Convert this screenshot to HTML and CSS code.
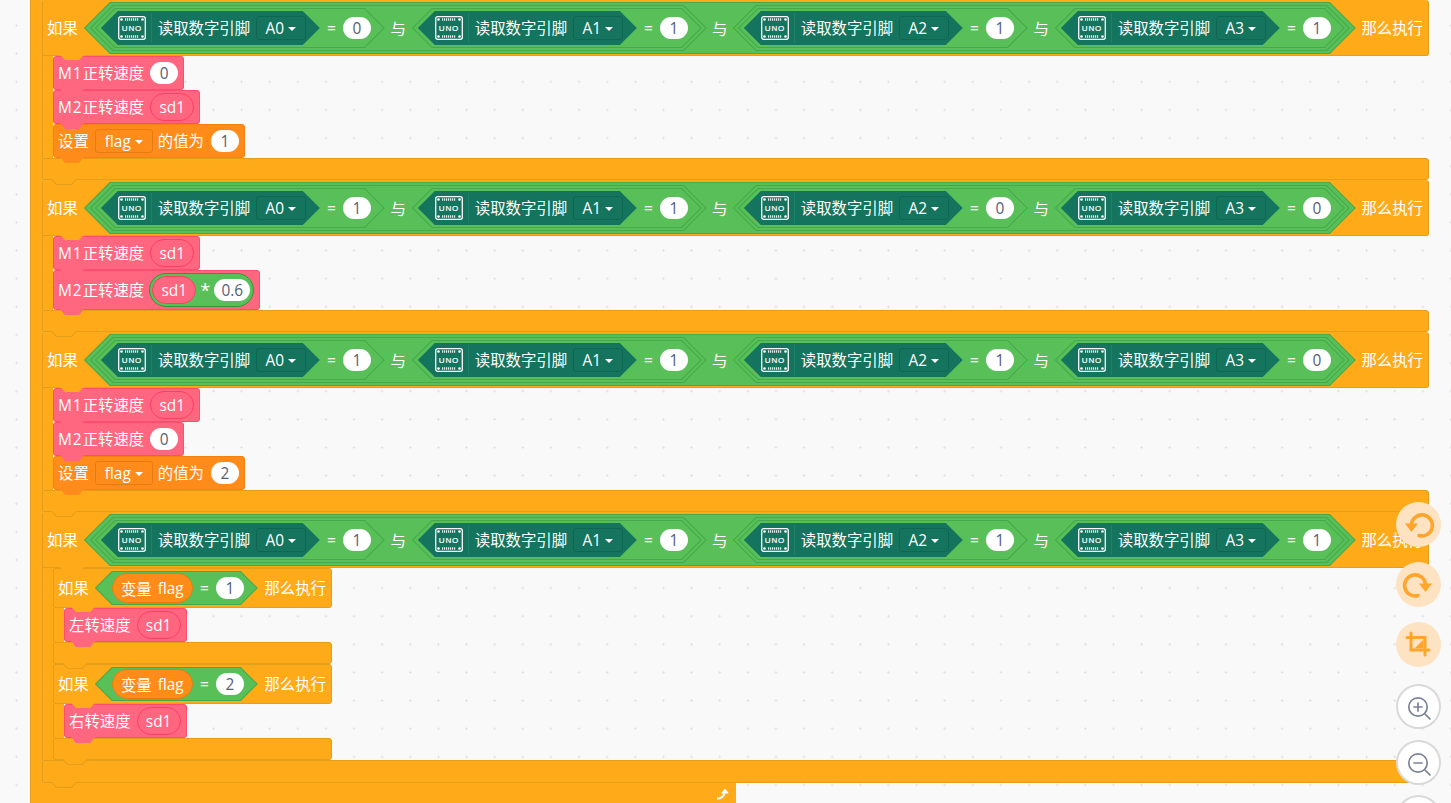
FILE: index.html
```html
<!DOCTYPE html>
<html lang="zh">
<head>
<meta charset="utf-8">
<title>Blocks</title>
<link rel="stylesheet" href="styles.css">
</head>
<body>
<svg class="defs">
  <symbol id="uno" viewBox="0 0 28 24">
    <rect x="0.7" y="0.7" width="26.6" height="22.6" rx="2" fill="none" stroke="#fff" stroke-width="1.3"/>
    <circle cx="3.5" cy="3.5" r="1.3" fill="#fff"/><circle cx="24.5" cy="3.5" r="1.3" fill="#fff"/>
    <circle cx="3.5" cy="20.5" r="1.3" fill="#fff"/><circle cx="24.5" cy="20.5" r="1.3" fill="#fff"/>
    <path d="M7 3.5H21M7 20.5H21" stroke="#fff" stroke-opacity=".85" stroke-width="2.6" stroke-dasharray="1.2 .8" fill="none"/>
    <text x="14" y="15.2" text-anchor="middle" font-size="8" font-weight="400" letter-spacing=".9" fill="#fff" stroke="#fff" stroke-width=".2" font-family="Liberation Sans, sans-serif">UNO</text>
  </symbol>
</svg>
<main class="canvas">
  <div class="program">
    <section class="if">
      <div class="head">
        <span class="t">如果</span>
        <div class="hex h52">
          <div class="hex h46">
            <div class="hex h40"><div class="hex h34 dark"><svg class="uno"><use href="#uno"/></svg><span class="sep"></span><span class="t">读取数字引脚</span><span class="dd">A0<i class="caret"></i></span></div><span class="op">=</span><span class="pill">0</span></div>
            <span class="and">与</span>
            <div class="hex h40"><div class="hex h34 dark"><svg class="uno"><use href="#uno"/></svg><span class="sep"></span><span class="t">读取数字引脚</span><span class="dd">A1<i class="caret"></i></span></div><span class="op">=</span><span class="pill">1</span></div>
          </div>
          <span class="and mid">与</span>
          <div class="hex h46">
            <div class="hex h40"><div class="hex h34 dark"><svg class="uno"><use href="#uno"/></svg><span class="sep"></span><span class="t">读取数字引脚</span><span class="dd">A2<i class="caret"></i></span></div><span class="op">=</span><span class="pill">1</span></div>
            <span class="and">与</span>
            <div class="hex h40"><div class="hex h34 dark"><svg class="uno"><use href="#uno"/></svg><span class="sep"></span><span class="t">读取数字引脚</span><span class="dd">A3<i class="caret"></i></span></div><span class="op">=</span><span class="pill">1</span></div>
          </div>
        </div>
        <span class="t">那么执行</span>
      </div>
      <div class="body">
        <div class="stmt pink"><span class="t"><span class="lat">M1</span>正转速度</span><span class="pill">0</span></div>
        <div class="stmt pink"><span class="t"><span class="lat">M2</span>正转速度</span><span class="ref">sd1</span></div>
        <div class="stmt amber"><span class="t">设置</span><span class="dd amber-dd">flag<i class="caret"></i></span><span class="t">的值为</span><span class="pill">1</span></div>
      </div>
      <div class="foot"></div>
    </section>

    <section class="if">
      <div class="head">
        <span class="t">如果</span>
        <div class="hex h52">
          <div class="hex h46">
            <div class="hex h40"><div class="hex h34 dark"><svg class="uno"><use href="#uno"/></svg><span class="sep"></span><span class="t">读取数字引脚</span><span class="dd">A0<i class="caret"></i></span></div><span class="op">=</span><span class="pill">1</span></div>
            <span class="and">与</span>
            <div class="hex h40"><div class="hex h34 dark"><svg class="uno"><use href="#uno"/></svg><span class="sep"></span><span class="t">读取数字引脚</span><span class="dd">A1<i class="caret"></i></span></div><span class="op">=</span><span class="pill">1</span></div>
          </div>
          <span class="and mid">与</span>
          <div class="hex h46">
            <div class="hex h40"><div class="hex h34 dark"><svg class="uno"><use href="#uno"/></svg><span class="sep"></span><span class="t">读取数字引脚</span><span class="dd">A2<i class="caret"></i></span></div><span class="op">=</span><span class="pill">0</span></div>
            <span class="and">与</span>
            <div class="hex h40"><div class="hex h34 dark"><svg class="uno"><use href="#uno"/></svg><span class="sep"></span><span class="t">读取数字引脚</span><span class="dd">A3<i class="caret"></i></span></div><span class="op">=</span><span class="pill">0</span></div>
          </div>
        </div>
        <span class="t">那么执行</span>
      </div>
      <div class="body">
        <div class="stmt pink"><span class="t"><span class="lat">M1</span>正转速度</span><span class="ref">sd1</span></div>
        <div class="stmt pink tall"><span class="t"><span class="lat">M2</span>正转速度</span><div class="math"><span class="ref">sd1</span><span class="star">*</span><span class="pill wide">0.6</span></div></div>
      </div>
      <div class="foot"></div>
    </section>

    <section class="if">
      <div class="head">
        <span class="t">如果</span>
        <div class="hex h52">
          <div class="hex h46">
            <div class="hex h40"><div class="hex h34 dark"><svg class="uno"><use href="#uno"/></svg><span class="sep"></span><span class="t">读取数字引脚</span><span class="dd">A0<i class="caret"></i></span></div><span class="op">=</span><span class="pill">1</span></div>
            <span class="and">与</span>
            <div class="hex h40"><div class="hex h34 dark"><svg class="uno"><use href="#uno"/></svg><span class="sep"></span><span class="t">读取数字引脚</span><span class="dd">A1<i class="caret"></i></span></div><span class="op">=</span><span class="pill">1</span></div>
          </div>
          <span class="and mid">与</span>
          <div class="hex h46">
            <div class="hex h40"><div class="hex h34 dark"><svg class="uno"><use href="#uno"/></svg><span class="sep"></span><span class="t">读取数字引脚</span><span class="dd">A2<i class="caret"></i></span></div><span class="op">=</span><span class="pill">1</span></div>
            <span class="and">与</span>
            <div class="hex h40"><div class="hex h34 dark"><svg class="uno"><use href="#uno"/></svg><span class="sep"></span><span class="t">读取数字引脚</span><span class="dd">A3<i class="caret"></i></span></div><span class="op">=</span><span class="pill">0</span></div>
          </div>
        </div>
        <span class="t">那么执行</span>
      </div>
      <div class="body">
        <div class="stmt pink"><span class="t"><span class="lat">M1</span>正转速度</span><span class="ref">sd1</span></div>
        <div class="stmt pink"><span class="t"><span class="lat">M2</span>正转速度</span><span class="pill">0</span></div>
        <div class="stmt amber"><span class="t">设置</span><span class="dd amber-dd">flag<i class="caret"></i></span><span class="t">的值为</span><span class="pill">2</span></div>
      </div>
      <div class="foot"></div>
    </section>

    <section class="if">
      <div class="head">
        <span class="t">如果</span>
        <div class="hex h52">
          <div class="hex h46">
            <div class="hex h40"><div class="hex h34 dark"><svg class="uno"><use href="#uno"/></svg><span class="sep"></span><span class="t">读取数字引脚</span><span class="dd">A0<i class="caret"></i></span></div><span class="op">=</span><span class="pill">1</span></div>
            <span class="and">与</span>
            <div class="hex h40"><div class="hex h34 dark"><svg class="uno"><use href="#uno"/></svg><span class="sep"></span><span class="t">读取数字引脚</span><span class="dd">A1<i class="caret"></i></span></div><span class="op">=</span><span class="pill">1</span></div>
          </div>
          <span class="and mid">与</span>
          <div class="hex h46">
            <div class="hex h40"><div class="hex h34 dark"><svg class="uno"><use href="#uno"/></svg><span class="sep"></span><span class="t">读取数字引脚</span><span class="dd">A2<i class="caret"></i></span></div><span class="op">=</span><span class="pill">1</span></div>
            <span class="and">与</span>
            <div class="hex h40"><div class="hex h34 dark"><svg class="uno"><use href="#uno"/></svg><span class="sep"></span><span class="t">读取数字引脚</span><span class="dd">A3<i class="caret"></i></span></div><span class="op">=</span><span class="pill">1</span></div>
          </div>
        </div>
        <span class="t">那么执行</span>
      </div>
      <div class="body">
        <section class="if small">
          <div class="head">
            <span class="t">如果</span>
            <div class="hex h34 cond"><span class="var"><span>变量</span><span>flag</span></span><span class="op">=</span><span class="pill">1</span></div>
            <span class="t">那么执行</span>
          </div>
          <div class="body">
            <div class="stmt pink"><span class="t">左转速度</span><span class="ref">sd1</span></div>
          </div>
          <div class="foot"></div>
        </section>
        <section class="if small">
          <div class="head">
            <span class="t">如果</span>
            <div class="hex h34 cond"><span class="var"><span>变量</span><span>flag</span></span><span class="op">=</span><span class="pill">2</span></div>
            <span class="t">那么执行</span>
          </div>
          <div class="body">
            <div class="stmt pink"><span class="t">右转速度</span><span class="ref">sd1</span></div>
          </div>
          <div class="foot"></div>
        </section>
      </div>
      <div class="foot foot-end"></div>
    </section>
  </div>
  <div class="outer-foot">
    <svg class="return" viewBox="0 0 14 12" width="14" height="12"><path d="M1 10.5C5 10.5 7.5 9.5 8.4 5" fill="none" stroke="#fff" stroke-width="2"/><path d="M5 5.5L9 .5L12.8 5.5Z" fill="#fff"/></svg>
  </div>

  <aside class="tools">
    <div class="tool-group">
      <button class="tool warm" type="button"><svg viewBox="0 0 45 45"><path d="M15.5 22A10.5 10.5 0 1 1 23 33.5" fill="none" stroke="#ffa52c" stroke-width="3.6" stroke-linecap="round"/><path d="M9 21.500H22L15.500 30Z" fill="#ffa52c"/></svg></button>
      <button class="tool warm" type="button"><svg viewBox="0 0 45 45"><path d="M29.500 22A10.500 10.500 0 1 0 22 33.500" fill="none" stroke="#ffa52c" stroke-width="3.600" stroke-linecap="round"/><path d="M36 21.500H23L29.500 30Z" fill="#ffa52c"/></svg></button>
      <button class="tool warm" type="button"><svg viewBox="0 0 45 45"><path d="M15 11V28H33M11 15.500H29V33" fill="none" stroke="#ffa52c" stroke-width="3" stroke-linecap="round"/><path d="M17 26.500V17H27Z" fill="#fde3c2"/><path d="M18.500 26.500L27.500 17.500V26.500Z" fill="#ffa52c"/></svg></button>
    </div>
    <div class="tool-group zooms">
      <button class="tool cold" type="button"><svg viewBox="0 0 41 41"><circle cx="20" cy="21" r="9.200" fill="none" stroke="#7b8099" stroke-width="1.700"/><path d="M16 21H24M20 17V25M27 28L32 33" fill="none" stroke="#7b8099" stroke-width="1.700" stroke-linecap="round"/></svg></button>
      <button class="tool cold" type="button"><svg viewBox="0 0 41 41"><circle cx="20" cy="21" r="9.200" fill="none" stroke="#7b8099" stroke-width="1.700"/><path d="M16 21H24M27 28L32 33" fill="none" stroke="#7b8099" stroke-width="1.700" stroke-linecap="round"/></svg></button>
      <button class="tool cold" type="button"></button>
    </div>
  </aside>
</main>
</body>
</html>
```
FILE: styles.css
```css
* { box-sizing: border-box; }
html, body { margin: 0; height: 100%; overflow: hidden; }
body { font-family: "Open Sans", "Noto Sans CJK SC", sans-serif; font-size: 15.4px; color: #fff; }
.defs { display: none; }

.canvas {
  position: relative;
  height: 803px;
  overflow: hidden;
  background-color: #f9f9f9;
  background-image: radial-gradient(circle, #e4e4e4 1px, transparent 1.2px);
  background-size: 28.13px 28.13px;
  background-position: 2.5px 11.5px;
}

.program {
  margin-left: 30px;
  width: 1399px;
  padding-left: 11px;
  border-left: 1px solid #e59e1a;
  background: linear-gradient(#ffab19, #ffab19) left / 11px 100% no-repeat;
}
.outer-foot {
  margin-left: 30px;
  width: 706px;
  height: 20px;
  display: flex;
  justify-content: flex-end;
  align-items: center;
  padding: 0 6px 0 0;
  background: #ffab19;
  border-left: 1px solid #e59e1a;
}
.return { margin-top: 2px; }

/* C-shaped control block */
.if { width: 1387px; }
.head, .foot {
  position: relative;
  background: #ffab19;
  border: 1px solid #e59e1a;
  border-radius: 0 3px 3px 0;
}
.head {
  display: flex;
  align-items: center;
  height: 56px;
  padding: 0 5px 0 4px;
  border-top-color: #ffab19;
}
.head > .t:last-child { margin-left: auto; }
.h52 { margin-left: 6px; }
.foot { height: 22px; }
.foot-end { height: 23px; }
.body {
  border-left: 1px solid #e59e1a;
  padding-left: 10px;
  background: linear-gradient(#ffab19, #ffab19) left / 10px 100% no-repeat;
}

/* puzzle tabs */
.head::before, .foot::before, .foot::after, .stmt::after {
  content: "";
  position: absolute;
  top: 100%;
  z-index: 2;
  width: 24px;
  height: 6px;
  clip-path: polygon(0 0, 100% 0, calc(100% - 5px) 100%, 5px 100%);
}
.head::before { left: 17px; height: 5px; background: #ffab19; }
.foot::after { left: 8px; width: 26px; height: 6px; background: #e59e1a; }
.foot::before { left: 9px; height: 5px; background: #ffab19; z-index: 3; }
.stmt::after { left: 6px; background: var(--fill); }

/* hexagons */
.hex {
  --poly: polygon(var(--tip) 0, calc(100% - var(--tip)) 0, 100% 50%, calc(100% - var(--tip)) 100%, var(--tip) 100%, 0 50%);
  position: relative;
  isolation: isolate;
  display: flex;
  align-items: center;
  flex-shrink: 0;
  background: #46a84a;
  clip-path: var(--poly);
}
.hex::before {
  content: "";
  position: absolute;
  inset: 1px 1.5px;
  z-index: -1;
  background: #59c059;
  --in: calc(var(--tip) - 1px);
  clip-path: polygon(var(--in) 0, calc(100% - var(--in)) 0, 100% 50%, calc(100% - var(--in)) 100%, var(--in) 100%, 0 50%);
}
.h52 { --tip: 26px; height: 52px; padding: 0 6px; }
.h46 { --tip: 23px; height: 46px; padding: 0 5px; }
.h40 { --tip: 20px; height: 40px; padding: 0 14px 0 6px; }
.h34 { --tip: 17px; height: 34px; }
.dark { background: #14745e; padding: 0 14px 0 17px; }
.dark::before { display: none; }
.cond { padding: 0 14px 0 17px; margin-left: 6px; }

.uno { width: 28px; height: 24px; flex-shrink: 0; }
.sep { width: 1px; height: 30px; margin: 0 6px 0 5px; background: #1d8068; }
.t { white-space: nowrap; line-height: 1; padding-top: 2px; }
.lat { letter-spacing: 1px; }
.dark .t { width: 92px; }
.dd {
  display: flex;
  align-items: center;
  justify-content: center;
  gap: 4px;
  width: 50px;
  height: 24px;
  margin-left: 6px;
  padding-top: 1px;
  border: 1px solid #106751;
  border-radius: 3px;
}
.caret {
  width: 0;
  height: 0;
  border: 4px solid transparent;
  border-top: 4px solid #fff;
  border-bottom: 0;
}
.amber-dd {
  width: 58px;
  margin: 0 5px 0 6px;
  border-color: #e47c10;
}
.op { width: 23px; text-align: center; flex-shrink: 0; }
.and { width: 27px; text-align: center; flex-shrink: 0; position: relative; }
.and.mid { width: 26px; }
.pill {
  display: flex;
  align-items: center;
  justify-content: center;
  width: 28px;
  height: 22px;
  border-radius: 11px;
  background: #fff;
  color: #575e75;
  flex-shrink: 0;
}
.pill.wide { width: 36px; }

.stmt {
  --fill: #ff6680;
  position: relative;
  display: flex;
  align-items: center;
  gap: 6px;
  width: fit-content;
  height: 34px;
  padding: 0 5px 0 4px;
  background: var(--fill);
  border: 1px solid #ff4d6d;
  border-radius: 3px;
}
.amber { --fill: #ff8c1a; border-color: #f58010; gap: 0; }
.amber .pill { margin-left: 7px; }
.tall { height: 40px; }
.ref {
  display: flex;
  align-items: center;
  justify-content: center;
  width: 44px;
  height: 28px;
  border-radius: 14px;
  background: #ff6680;
  border: 1px solid #ff3f60;
  flex-shrink: 0;
}
.math {
  display: flex;
  align-items: center;
  width: 105px;
  height: 34px;
  padding: 0 3px 0 2px;
  border-radius: 17px;
  background: #59c059;
  border: 1px solid #389438;
  margin-left: -1px;
}
.star { flex: 1; text-align: center; font-size: 18px; line-height: 1; }

/* nested if */
.small { width: 279px; }
.small .head { height: 40px; padding: 0 5px 0 4px; }
.small .head { border-top-color: #e59e1a; }
.var {
  display: flex;
  align-items: center;
  justify-content: center;
  gap: 6px;
  width: 81px;
  height: 30px;
  border-radius: 15px;
  background: #ff8c1a;
  border: 1px solid #e47c10;
}

/* floating toolbar */
.tools {
  position: absolute;
  top: 502px;
  right: 10px;
  display: flex;
  flex-direction: column;
  gap: 17px;
}
.tool-group { display: flex; flex-direction: column; gap: 15px; }
.zooms { gap: 10.5px; }
.tool {
  display: block;
  width: 45px;
  height: 45px;
  padding: 0;
  border-radius: 50%;
  border: 0;
}
.tool svg { display: block; width: 100%; height: 100%; }
.warm { background: #fde3c2; }
.cold { background: #fff; border: 2px solid #d9d9d9; }
```
